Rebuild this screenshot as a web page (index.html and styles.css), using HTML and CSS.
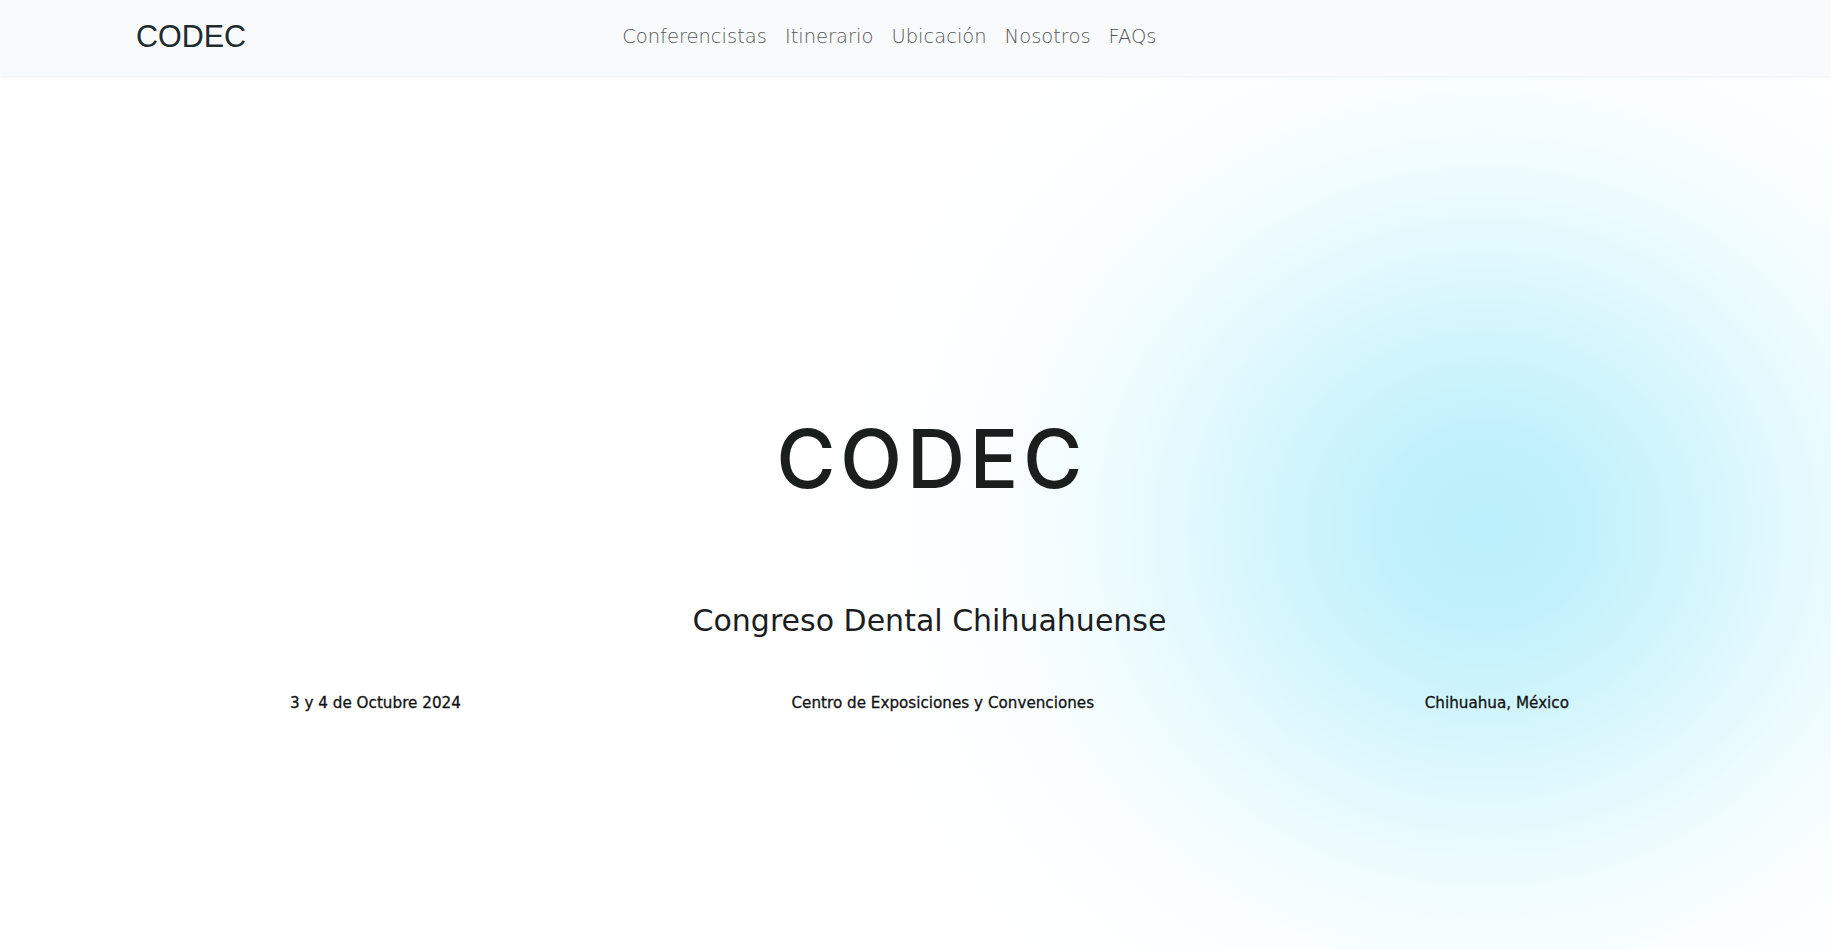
FILE: index.html
```html
<!DOCTYPE html>
<html lang="es">
<head>
<meta charset="utf-8">
<title>CODEC</title>
<link rel="stylesheet" href="styles.css">
</head>
<body>
<header class="nav">
  <a class="logo" href="#">CODEC</a>
  <nav class="links">
    <a href="#">Conferencistas</a>
    <a href="#">Itinerario</a>
    <a href="#">Ubicación</a>
    <a href="#">Nosotros</a>
    <a href="#">FAQs</a>
  </nav>
</header>
<main class="hero">
  <h1 class="title">CODEC</h1>
  <p class="subtitle">Congreso Dental Chihuahuense</p>
  <div class="info">
    <span>3 y 4 de Octubre 2024</span>
    <span>Centro de Exposiciones y Convenciones</span>
    <span>Chihuahua, México</span>
  </div>
</main>
</body>
</html>
```
FILE: styles.css
```css
* { box-sizing: border-box; }
html, body { margin: 0; padding: 0; }
body {
  width: 1831px;
  height: 950px;
  overflow: hidden;
  background: #ffffff;
  font-family: "DejaVu Sans", sans-serif;
}
a { text-decoration: none; }

.nav {
  height: 76px;
  display: flex;
  align-items: center;
  padding: 0 136px 3px;
  background: #f8fafb;
  box-shadow: 0 1px 3px rgba(0, 0, 0, 0.08);
  position: relative;
  z-index: 1;
}
.logo {
  font-family: "Liberation Sans", Arial, sans-serif;
  font-size: 30.5px;
  color: #1e2c32;
}
.links {
  display: flex;
  gap: 18px;
  margin-left: 376px;
}
.links a {
  font-family: "DejaVu Sans", sans-serif;
  font-size: 19.5px;
  color: #555858;
  font-weight: 300;
}

.hero {
  height: 874px;
  padding-left: 28px;
  display: flex;
  flex-direction: column;
  align-items: center;
  background: radial-gradient(ellipse 680px 630px at 1485px 450px,
    rgba(186, 239, 251, 1) 0%,
    rgba(190, 240, 251, 0.95) 14%,
    rgba(197, 242, 252, 0.83) 28%,
    rgba(207, 245, 252, 0.64) 43%,
    rgba(221, 248, 253, 0.44) 58%,
    rgba(235, 251, 254, 0.26) 72%,
    rgba(246, 253, 255, 0.11) 86%,
    rgba(255, 255, 255, 0) 100%);
}
.title {
  margin: 338px 0 0 4px;
  font-family: "Inter", sans-serif;
  font-weight: 500;
  font-size: 81px;
  line-height: 90px;
  letter-spacing: 4.5px;
  color: #1a1f1e;
}
.subtitle {
  margin: 99px 0 0;
  font-size: 30px;
  line-height: 36px;
  color: #1c1e1e;
}
.info {
  width: 1279px;
  margin-top: 55px;
  display: flex;
  justify-content: space-between;
  font-size: 15.2px;
  color: #111313;
  -webkit-text-stroke: 0.3px #111313;
}
```
